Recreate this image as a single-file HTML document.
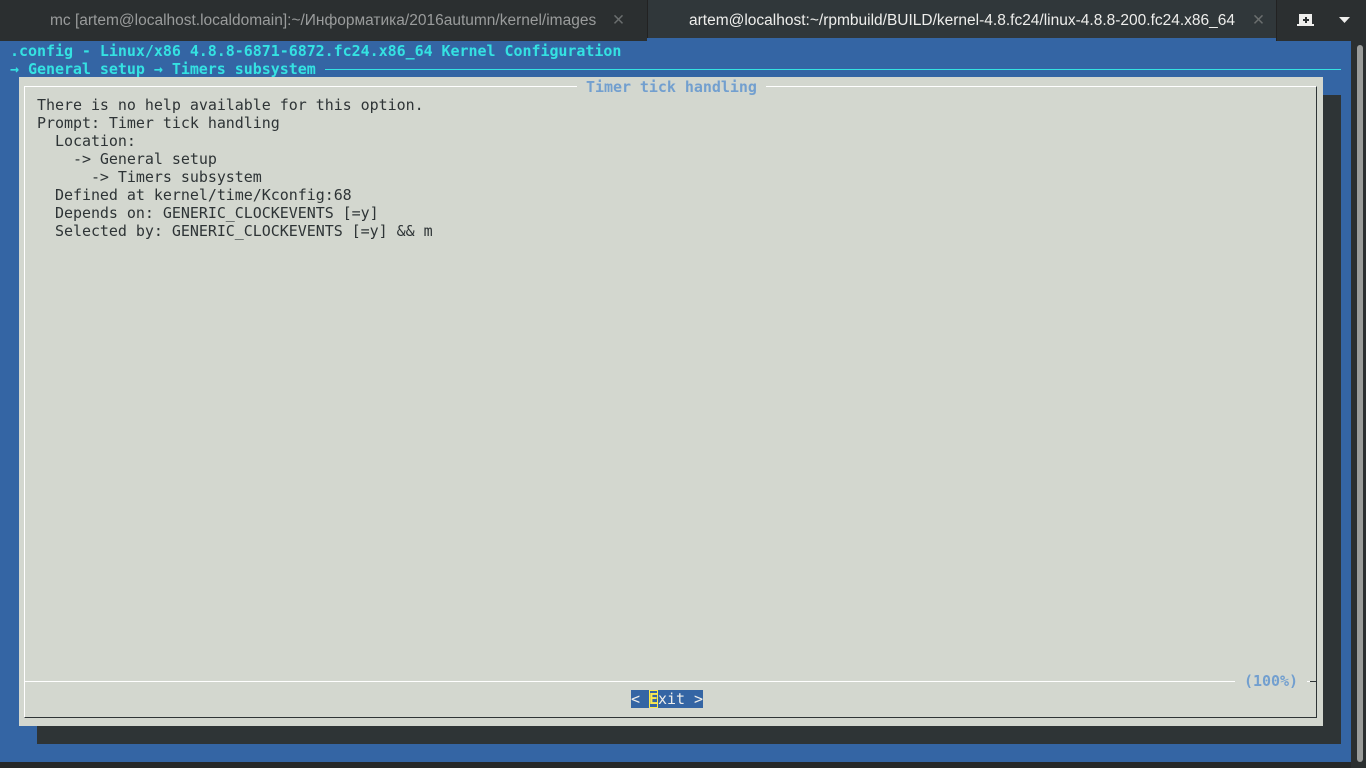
<!DOCTYPE html>
<html><head><meta charset="utf-8"><style>
*{margin:0;padding:0;box-sizing:border-box}
body{width:1366px;height:768px;background:#262828;position:relative;overflow:hidden;font-family:"DejaVu Sans Mono","Liberation Mono",monospace;font-size:15px}
.a{position:absolute;white-space:pre;line-height:18px;letter-spacing:-0.04px}
.tab{position:absolute;top:0;height:41px;font-family:"Liberation Sans","Noto Sans CJK SC",sans-serif;font-size:15.5px;line-height:41px;white-space:nowrap}
</style></head><body>
<div style="position:absolute;left:0;top:0;width:1366px;height:41px;background:#2b2f30"></div>
<div style="position:absolute;left:647px;top:0;width:629px;height:41px;background:#30373a;border-left:1px solid #222"></div>
<div style="position:absolute;left:647px;top:38px;width:629px;height:3px;background:#3465a4"></div>
<div style="position:absolute;left:1276px;top:0;width:1px;height:41px;background:#222"></div>
<div class="tab" style="left:50px;color:#9a9c9c">mc [artem@localhost.localdomain]:~/Информатика/2016autumn/kernel/images</div>
<div class="tab" style="left:612px;color:#6a6e6e">✕</div>
<div class="tab" style="left:689px;color:#eeeeec">artem@localhost:~/rpmbuild/BUILD/kernel-4.8.fc24/linux-4.8.8-200.fc24.x86_64</div>
<div class="tab" style="left:1252px;color:#6a6e6e">✕</div>
<svg style="position:absolute;left:1297px;top:13px" width="17" height="14"><path d="M2 1h13v10h2v2H0v-2h2z" fill="#eeeeec"/><path d="M8 4h2v2h2v2h-2v2H8V8H6V6h2z" fill="#2b2f30"/></svg>
<svg style="position:absolute;left:1339px;top:17px" width="11" height="7"><path d="M0 0h11L5.5 6z" fill="#eeeeec"/></svg>
<div style="position:absolute;left:0;top:41px;width:1351px;height:721px;background:#3465a4"></div>
<div style="position:absolute;left:1351px;top:41px;width:15px;height:727px;background:#2b2f30"></div>
<div style="position:absolute;left:1357px;top:45px;width:6px;height:717px;background:#9a9c9a;border-radius:3px"></div>
<div class="a" style="left:10px;top:42px;color:#34e2e2;font-weight:bold">.config - Linux/x86 4.8.8-6871-6872.fc24.x86_64 Kernel Configuration</div>
<div class="a" style="left:10px;top:60px;color:#34e2e2;font-weight:bold">→ General setup → Timers subsystem</div>
<div style="position:absolute;left:325px;top:69px;width:1016px;height:1px;background:#34e2e2"></div>
<div style="position:absolute;left:37px;top:95px;width:1304px;height:649px;background:#2e3436"></div>
<div style="position:absolute;left:19px;top:77px;width:1304px;height:649px;background:#d3d7cf"></div>
<div style="position:absolute;left:24px;top:86px;width:1293px;height:632px;border-left:1px solid #fff;border-top:1px solid #fff;border-right:1px solid #2e3436;border-bottom:1px solid #2e3436"></div>
<div style="position:absolute;left:24px;top:681px;width:1293px;height:1px;background:#fff"></div>
<div style="position:absolute;left:1310px;top:681px;width:7px;height:1px;background:#2e3436"></div>
<div class="a" style="left:577px;top:78px;color:#729fcf;font-weight:bold;background:#d3d7cf"> Timer tick handling </div>
<div class="a" style="left:1235px;top:672px;color:#729fcf;font-weight:bold;background:#d3d7cf"> (100%) </div>
<div class="a" style="left:37px;top:96px;color:#2e3436">There is no help available for this option.
Prompt: Timer tick handling
  Location:
    -&gt; General setup
      -&gt; Timers subsystem
  Defined at kernel/time/Kconfig:68
  Depends on: GENERIC_CLOCKEVENTS [=y]
  Selected by: GENERIC_CLOCKEVENTS [=y] &amp;&amp; m</div>
<div style="position:absolute;left:631px;top:690px;width:72px;height:18px;background:#3465a4"></div>
<div style="position:absolute;left:649px;top:690px;width:9px;height:18px;border:1px solid #fce94f"></div>
<div class="a" style="left:631px;top:690px;color:#eeeeec">&lt; <span style="color:#fce94f;font-weight:bold">E</span>xit &gt;</div>
</body></html>
